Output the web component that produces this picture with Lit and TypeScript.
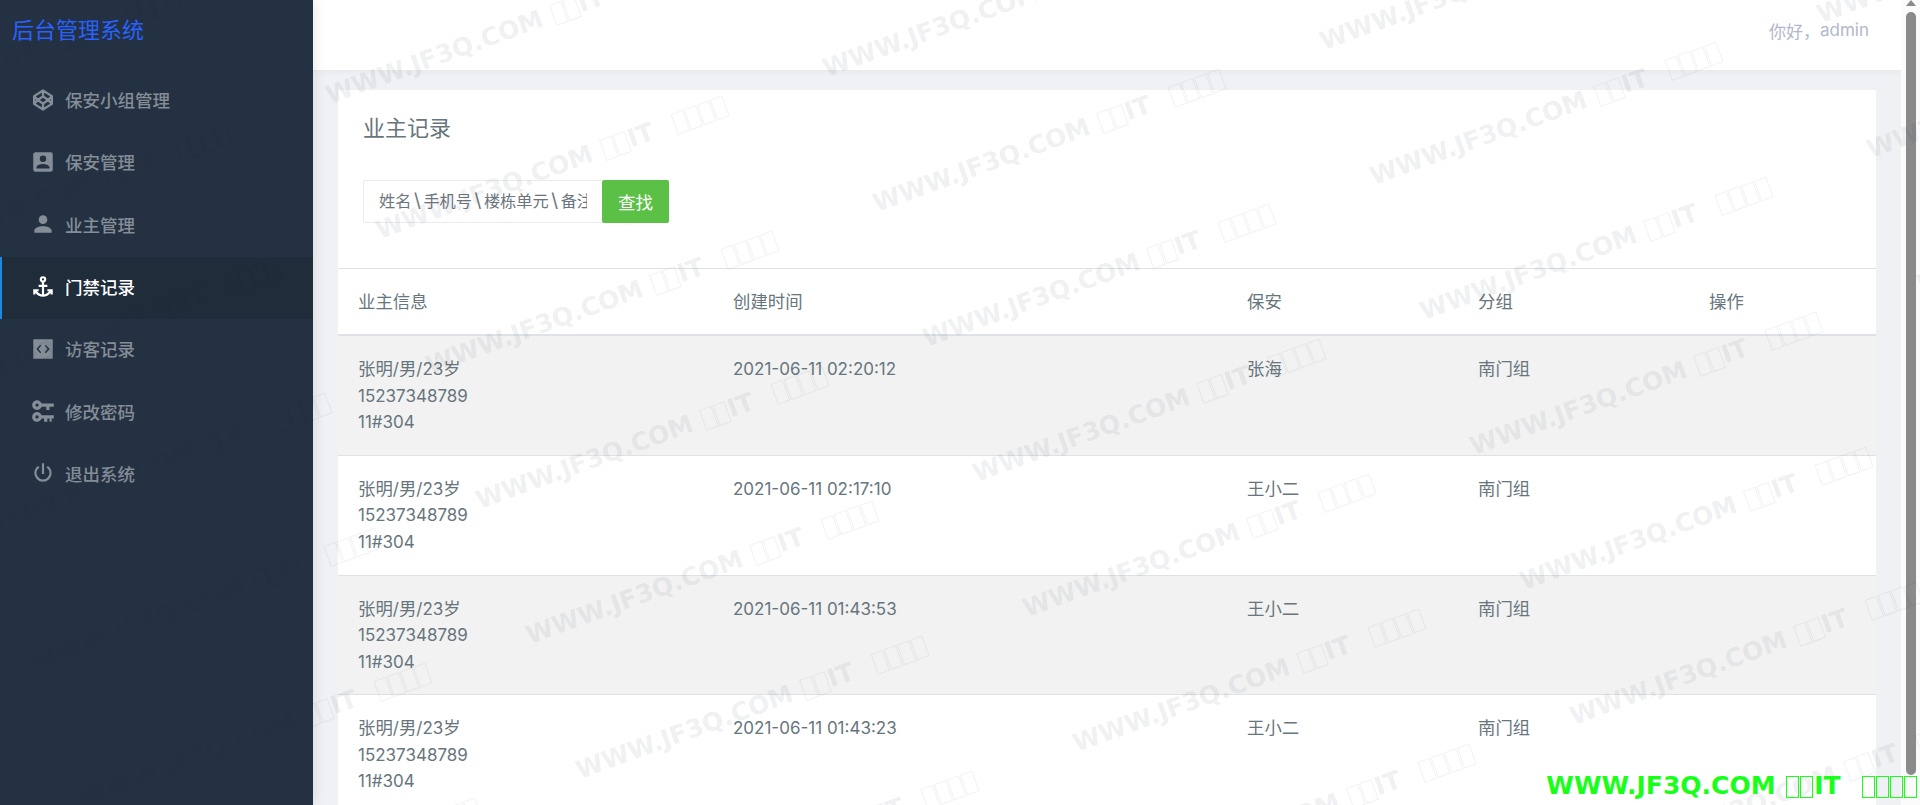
import { LitElement, html, css, svg } from "lit";
import { customElement } from "lit/decorators.js";

const ICONS: Record<string, unknown> = {
  codepen: svg`<path d="M12 3.2 20.2 8.4V15.6L12 20.8 3.8 15.6V8.4Z M12 8.6 7.2 12 12 15.4 16.8 12Z M12 3.2V8.6 M12 15.4V20.8 M3.8 8.4 7.2 12 3.8 15.6 M20.2 8.4 16.8 12 20.2 15.6" fill="none" stroke="currentColor" stroke-width="2.1" stroke-linejoin="round"/>`,
  box: svg`<path d="M6,17C6,15 10,13.9 12,13.9C14,13.9 18,15 18,17V18H6M15,9A3,3 0 0,1 12,12A3,3 0 0,1 9,9A3,3 0 0,1 12,6A3,3 0 0,1 15,9M3,5V19A2,2 0 0,0 5,21H19A2,2 0 0,0 21,19V5A2,2 0 0,0 19,3H5C3.89,3 3,3.9 3,5Z"/>`,
  account: svg`<path d="M12,4A4,4 0 0,1 16,8A4,4 0 0,1 12,12A4,4 0 0,1 8,8A4,4 0 0,1 12,4M12,14C16.42,14 20,15.79 20,18V20H4V18C4,15.79 7.58,14 12,14Z"/>`,
  anchor: svg`<path d="M12,2A3,3 0 0,0 9,5C9,6.27 9.8,7.4 11,7.83V10H8V12H11V18.92C9.16,18.63 7.53,17.57 6.53,16H8V14H3V19H5V17.3C6.58,19.61 9.2,21 12,21C14.8,21 17.42,19.61 19,17.3V19H21V14H16V16H17.46C16.46,17.57 14.83,18.63 13,18.92V12H16V10H13V7.82C14.2,7.4 15,6.27 15,5A3,3 0 0,0 12,2M12,4A1,1 0 0,1 13,5A1,1 0 0,1 12,6A1,1 0 0,1 11,5A1,1 0 0,1 12,4Z"/>`,
  code: svg`<path fill-rule="evenodd" d="M3.6,3H20.4A.6,.6 0 0,1 21,3.6V20.4A.6,.6 0 0,1 20.4,21H3.6A.6,.6 0 0,1 3,20.4V3.6A.6,.6 0 0,1 3.6,3ZM10.3,9 9.4,8.1 5.9,12 9.4,15.9 10.3,15 7.7,12ZM13.7,9 16.3,12 13.7,15 14.6,15.9 18.1,12 14.6,8.1Z"/>`,
  keys: svg`<path d="M6.5,2C8.46,2 10.13,3.25 10.74,5H22V8H18V11H15V8H10.74C10.13,9.75 8.46,11 6.5,11C4,11 2,9 2,6.5C2,4 4,2 6.5,2M6.5,5A1.5,1.5 0 0,0 5,6.5A1.5,1.5 0 0,0 6.5,8A1.5,1.5 0 0,0 8,6.5A1.5,1.5 0 0,0 6.5,5M6.5,13C8.46,13 10.13,14.25 10.74,16H22V19H20V22H18V19H16V22H13V19H10.74C10.13,20.75 8.46,22 6.5,22C4,22 2,20 2,17.5C2,15 4,13 6.5,13M6.5,16A1.5,1.5 0 0,0 5,17.5A1.5,1.5 0 0,0 6.5,19A1.5,1.5 0 0,0 8,17.5A1.5,1.5 0 0,0 6.5,16Z" fill-rule="evenodd"/>`,
  power: svg`<path d="M16.56,5.44L15.11,6.89C16.84,7.94 18,9.83 18,12A6,6 0 0,1 12,18A6,6 0 0,1 6,12C6,9.83 7.16,7.94 8.88,6.88L7.44,5.44C5.36,6.88 4,9.28 4,12A8,8 0 0,0 12,20A8,8 0 0,0 20,12C20,9.28 18.64,6.88 16.56,5.44M13,3H11V13H13"/>`,
};

const MENU = [
  { icon: "codepen", label: "保安小组管理" },
  { icon: "box", label: "保安管理" },
  { icon: "account", label: "业主管理" },
  { icon: "anchor", label: "门禁记录", active: true },
  { icon: "code", label: "访客记录" },
  { icon: "keys", label: "修改密码" },
  { icon: "power", label: "退出系统" },
];

const ROWS = [
  { time: "2021-06-11 02:20:12", guard: "张海" },
  { time: "2021-06-11 02:17:10", guard: "王小二" },
  { time: "2021-06-11 01:43:53", guard: "王小二" },
  { time: "2021-06-11 01:43:23", guard: "王小二" },
];

const COLUMNS = ["业主信息", "创建时间", "保安", "分组", "操作"];

/* Latin runs and CJK runs have different sizes in the reference. */
const mix = (text: string) =>
  text.split(/([\x20-\x7e]+)/).filter(Boolean).map((part) =>
    /^[\x20-\x7e]/.test(part) ? html`<span class="lat">${part}</span>` : part
  );

const stamp = html`WWW.JF3Q.COM <i class="tofu"></i><i class="tofu"></i>IT&nbsp;&nbsp;<i class="tofu"></i><i class="tofu"></i><i class="tofu"></i><i class="tofu"></i>`;

const MARKS: { x: number; y: number }[] = [];
for (let j = -2; j < 9; j++) {
  for (let i = -3; i < 6; i++) {
    MARKS.push({ x: 331 + i * 497 + j * 50, y: 83 - i * 27 + j * 135 });
  }
}

@customElement("app-root")
export class AppRoot extends LitElement {
  static styles = css`
    :host {
      display: block;
      height: 100vh;
      overflow: hidden;
      position: relative;
      font-family: "Noto Sans CJK SC", sans-serif;
      color: #67757c;
    }
    .lat { font-family: Inter, "Noto Sans CJK SC", sans-serif; font-size: 17px; line-height: 1; }
    .layout { display: flex; height: 100%; background: #f0f1f4; }

    .side { width: 313px; flex: none; background: #233142; box-shadow: 1px 0 12px rgba(0,0,0,.1); z-index: 2; }
    .brand { height: 70px; padding: 10px 0 0 12px; box-sizing: border-box; font-size: 22px; line-height: 36px; color: #2962ff; }
    .menu { display: flex; flex-direction: column; }
    .item { height: 62.3px; box-sizing: border-box; display: flex; align-items: center; padding: 0 0 3px 30px; gap: 9px; font-size: 17.5px; font-weight: 500; color: #858d97; }
    .item svg { width: 26px; height: 26px; fill: currentColor; flex: none; }
    .item.active { background: #1f2c3a; color: #fff; box-shadow: inset 2px 0 0 #1e88e5; }

    .main { flex: 1; min-width: 0; display: flex; flex-direction: column; }
    .top { height: 70px; flex: none; background: #fff; box-sizing: border-box; display: flex; justify-content: flex-end; align-items: center; padding: 0 51px 10px 0; margin-right: -19px; font-size: 17px; color: #b1b8ca; box-shadow: 0 0 8px rgba(0,0,0,.06); z-index: 1; }
    .top .name { font-family: Inter, sans-serif; font-size: 17px; }
    .card { margin: 20px 25px 0; background: #fff; flex: none; }
    .card h2 { margin: 0; padding: 20px 25px 0; font-size: 22px; font-weight: 400; line-height: 32px; color: #67757c; }
    .search { display: flex; padding: 38px 25px 0; height: 43px; margin-bottom: 45px; }
    .input { width: 239px; box-sizing: border-box; height: 43px; border: 1px solid #e9ecef; border-right: 0; border-radius: 2px 0 0 2px; padding: 0 15px; font-size: 16.2px; line-height: 39px; color: #6c757d; }
    .clip { white-space: nowrap; overflow: hidden; }
    .clip b { font-weight: 400; display: inline-block; width: 12px; text-align: center; font-family: Inter, sans-serif; font-size: 19px; line-height: 1; }
    .search button { width: 67px; height: 43px; border: 0; border-radius: 2px; background: #5ac146; color: #fff; font: 17.5px "Noto Sans CJK SC", sans-serif; padding: 0; }

    .row { display: grid; grid-template-columns: 375px 514px 231px 231px 1fr; }
    .head { border-top: 1px solid #dee2e6; border-bottom: 2px solid #dee2e6; height: 68px; box-sizing: border-box; align-items: center; font-size: 17.4px; padding-bottom: 2px; }
    .cell { padding-left: 20px; }
    .body { height: 119.75px; box-sizing: border-box; padding-top: 19px; border-bottom: 1px solid #dee2e6; font-size: 17.4px; line-height: 26.6px; }
    .body:nth-of-type(odd) { background: #f2f2f2; }
    .info div { white-space: nowrap; height: 26.6px; }

    .bar { width: 19px; flex: none; background: #fbfbfb; position: relative; z-index: 2; display: flex; flex-direction: column; align-items: center; }
    .arrow { width: 0; height: 0; border-left: 5.5px solid transparent; border-right: 5.5px solid transparent; border-bottom: 6px solid #8a8a8a; }
    .thumb { width: 10px; height: 763px; margin-top: 6px; border-radius: 5px; background: #8a8a8a; }

    .marks { position: absolute; inset: 0; overflow: hidden; pointer-events: none; z-index: 5; }
    .mark { position: absolute; white-space: nowrap; transform-origin: 0 100%; transform: rotate(-20deg); font: 700 25px/1 "DejaVu Sans", sans-serif; word-spacing: 2px; color: rgba(25,35,50,.085); }
    .tofu { display: inline-block; box-sizing: border-box; width: 13px; height: 22px; margin-right: 1px; border: 1px solid currentColor; vertical-align: -4px; opacity: .7; }
    .green { position: absolute; right: 2px; bottom: 7px; white-space: nowrap; z-index: 6; font: 700 25px/1 "DejaVu Sans", sans-serif; word-spacing: 2px; color: #19ff19; pointer-events: none; }
    .green .tofu { opacity: 1; }
  `;

  render() {
    return html`
      <div class="layout">
        <aside class="side">
          <div class="brand">后台管理系统</div>
          <nav class="menu">
            ${MENU.map((m) => html`
              <div class="item ${m.active ? "active" : ""}">
                <svg viewBox="0 0 24 24">${ICONS[m.icon]}</svg>
                <span>${m.label}</span>
              </div>`)}
          </nav>
        </aside>
        <div class="main">
          <header class="top">你好，<span class="name">admin</span></header>
          <section class="card">
            <h2>业主记录</h2>
            <div class="search">
              <div class="input"><div class="clip">姓名<b>\\</b>手机号<b>\\</b>楼栋单元<b>\\</b>备注</div></div>
              <button>查找</button>
            </div>
            <div class="row head">
              ${COLUMNS.map((c) => html`<div class="cell">${c}</div>`)}
            </div>
            ${ROWS.map((r) => html`
              <div class="row body">
                <div class="cell info">
                  <div>${mix("张明/男/23岁")}</div>
                  <div>${mix("15237348789")}</div>
                  <div>${mix("11#304")}</div>
                </div>
                <div class="cell">${mix(r.time)}</div>
                <div class="cell">${r.guard}</div>
                <div class="cell">南门组</div>
                <div class="cell"></div>
              </div>`)}
          </section>
        </div>
        <div class="bar"><div class="arrow"></div><div class="thumb"></div></div>
      </div>
      <div class="marks">
        ${MARKS.map((p) => html`<div class="mark" style="left:${p.x}px;top:${p.y}px">${stamp}</div>`)}
      </div>
      <div class="green">${stamp}</div>
    `;
  }
}
